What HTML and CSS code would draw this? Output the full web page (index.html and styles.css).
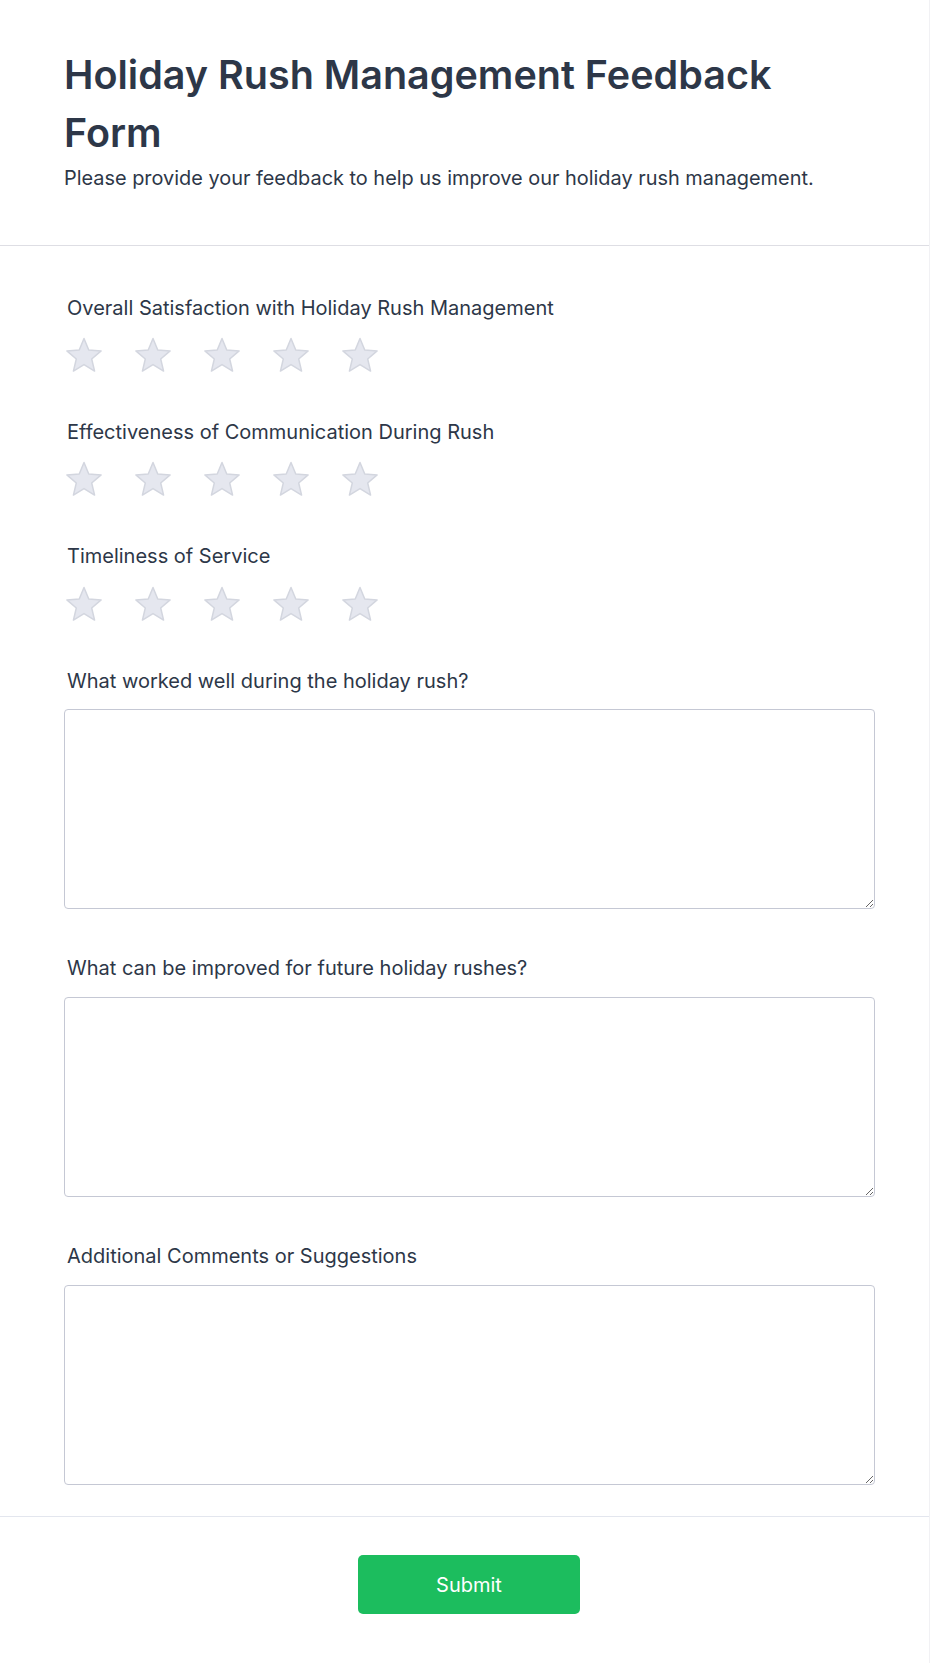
FILE: index.html
```html
<!DOCTYPE html>
<html lang="en">
<head>
<meta charset="utf-8">
<title>Holiday Rush Management Feedback Form</title>
<link rel="stylesheet" href="styles.css">
</head>
<body>
<div class="card">
  <header class="card-header">
    <h1 class="title">Holiday Rush Management Feedback Form</h1>
    <p class="subtitle">Please provide your feedback to help us improve our holiday rush management.</p>
  </header>
  <form class="card-body">
    <div class="field rating-field">
      <label class="field-label">Overall Satisfaction with Holiday Rush Management</label>
      <div class="stars">
        <svg class="star" viewBox="0 0 40 40"><path d="M20 2.5L24.76 13.95L37.12 14.94L27.7 23L30.58 35.06L20 28.6L9.42 35.06L12.3 23L2.88 14.94L15.24 13.95Z"/></svg>
        <svg class="star" viewBox="0 0 40 40"><path d="M20 2.5L24.76 13.95L37.12 14.94L27.7 23L30.58 35.06L20 28.6L9.42 35.06L12.3 23L2.88 14.94L15.24 13.95Z"/></svg>
        <svg class="star" viewBox="0 0 40 40"><path d="M20 2.5L24.76 13.95L37.12 14.94L27.7 23L30.58 35.06L20 28.6L9.42 35.06L12.3 23L2.88 14.94L15.24 13.95Z"/></svg>
        <svg class="star" viewBox="0 0 40 40"><path d="M20 2.5L24.76 13.95L37.12 14.94L27.7 23L30.58 35.06L20 28.6L9.42 35.06L12.3 23L2.88 14.94L15.24 13.95Z"/></svg>
        <svg class="star" viewBox="0 0 40 40"><path d="M20 2.5L24.76 13.95L37.12 14.94L27.7 23L30.58 35.06L20 28.6L9.42 35.06L12.3 23L2.88 14.94L15.24 13.95Z"/></svg>
      </div>
    </div>
    <div class="field rating-field">
      <label class="field-label">Effectiveness of Communication During Rush</label>
      <div class="stars">
        <svg class="star" viewBox="0 0 40 40"><path d="M20 2.5L24.76 13.95L37.12 14.94L27.7 23L30.58 35.06L20 28.6L9.42 35.06L12.3 23L2.88 14.94L15.24 13.95Z"/></svg>
        <svg class="star" viewBox="0 0 40 40"><path d="M20 2.5L24.76 13.95L37.12 14.94L27.7 23L30.58 35.06L20 28.6L9.42 35.06L12.3 23L2.88 14.94L15.24 13.95Z"/></svg>
        <svg class="star" viewBox="0 0 40 40"><path d="M20 2.5L24.76 13.95L37.12 14.94L27.7 23L30.58 35.06L20 28.6L9.42 35.06L12.3 23L2.88 14.94L15.24 13.95Z"/></svg>
        <svg class="star" viewBox="0 0 40 40"><path d="M20 2.5L24.76 13.95L37.12 14.94L27.7 23L30.58 35.06L20 28.6L9.42 35.06L12.3 23L2.88 14.94L15.24 13.95Z"/></svg>
        <svg class="star" viewBox="0 0 40 40"><path d="M20 2.5L24.76 13.95L37.12 14.94L27.7 23L30.58 35.06L20 28.6L9.42 35.06L12.3 23L2.88 14.94L15.24 13.95Z"/></svg>
      </div>
    </div>
    <div class="field rating-field">
      <label class="field-label">Timeliness of Service</label>
      <div class="stars">
        <svg class="star" viewBox="0 0 40 40"><path d="M20 2.5L24.76 13.95L37.12 14.94L27.7 23L30.58 35.06L20 28.6L9.42 35.06L12.3 23L2.88 14.94L15.24 13.95Z"/></svg>
        <svg class="star" viewBox="0 0 40 40"><path d="M20 2.5L24.76 13.95L37.12 14.94L27.7 23L30.58 35.06L20 28.6L9.42 35.06L12.3 23L2.88 14.94L15.24 13.95Z"/></svg>
        <svg class="star" viewBox="0 0 40 40"><path d="M20 2.5L24.76 13.95L37.12 14.94L27.7 23L30.58 35.06L20 28.6L9.42 35.06L12.3 23L2.88 14.94L15.24 13.95Z"/></svg>
        <svg class="star" viewBox="0 0 40 40"><path d="M20 2.5L24.76 13.95L37.12 14.94L27.7 23L30.58 35.06L20 28.6L9.42 35.06L12.3 23L2.88 14.94L15.24 13.95Z"/></svg>
        <svg class="star" viewBox="0 0 40 40"><path d="M20 2.5L24.76 13.95L37.12 14.94L27.7 23L30.58 35.06L20 28.6L9.42 35.06L12.3 23L2.88 14.94L15.24 13.95Z"/></svg>
      </div>
    </div>
    <div class="field text-field">
      <label class="field-label" for="worked">What worked well during the holiday rush?</label>
      <textarea id="worked" class="textarea"></textarea>
    </div>
    <div class="field text-field">
      <label class="field-label" for="improve">What can be improved for future holiday rushes?</label>
      <textarea id="improve" class="textarea"></textarea>
    </div>
    <div class="field text-field last">
      <label class="field-label" for="comments">Additional Comments or Suggestions</label>
      <textarea id="comments" class="textarea"></textarea>
    </div>
  </form>
  <footer class="card-footer">
    <button type="button" class="submit-btn">Submit</button>
  </footer>
</div>
</body>
</html>
```

FILE: styles.css
```css
* {
  box-sizing: border-box;
}

html, body {
  margin: 0;
  padding: 0;
  background: #ffffff;
}

body {
  font-family: Inter, "Noto Sans", "Liberation Sans", sans-serif;
  color: #2d3748;
}

.card {
  width: 930px;
  min-height: 1663px;
  background: #ffffff;
  border-right: 1px solid #f1f1f4;
}

.card-header {
  padding: 47px 55px 53px 64px;
  border-bottom: 1px solid #dedee4;
}

.title {
  margin: 0;
  max-width: 800px;
  font-size: 39.5px;
  line-height: 57.6px;
  font-weight: 600;
  color: #2d3748;
}

.subtitle {
  margin: 2px 0 0;
  font-size: 19.9px;
  line-height: 28px;
  font-weight: 400;
  color: #2d3748;
}

.card-body {
  display: flex;
  flex-direction: column;
  padding: 47.5px 55px 31.5px 64px;
  border-bottom: 1px solid #e3e6ee;
  margin: 0;
}

.field {
  display: flex;
  flex-direction: column;
}

.rating-field {
  margin-bottom: 41.8px;
}

.text-field {
  margin-bottom: 45.2px;
}

.text-field.last {
  margin-bottom: 0;
}

.field-label {
  display: block;
  margin-bottom: 14.5px;
  padding-left: 3px;
  font-size: 20px;
  line-height: 28px;
  font-weight: 400;
  color: #2d3748;
}

.text-field .field-label {
  margin-bottom: 14.6px;
}

.stars {
  display: flex;
  gap: 29px;
  height: 40px;
}

.star {
  width: 40px;
  height: 40px;
  display: block;
}

.star path {
  fill: #e5e7ef;
  stroke: #d3d6df;
  stroke-width: 1.5;
  stroke-linejoin: round;
}

.textarea {
  display: block;
  width: 811px;
  height: 200px;
  border: 1px solid #c5c8d4;
  border-radius: 4px;
  padding: 8px 12px;
  font-family: inherit;
  font-size: 16px;
  background: #ffffff;
}

.card-footer {
  display: flex;
  justify-content: center;
  padding: 38px 55px 49px 64px;
}

.submit-btn {
  width: 222px;
  height: 59px;
  border: none;
  border-radius: 5px;
  background: #1cbd5e;
  color: #ffffff;
  font-family: inherit;
  font-size: 20px;
  font-weight: 400;
  cursor: pointer;
}
```
